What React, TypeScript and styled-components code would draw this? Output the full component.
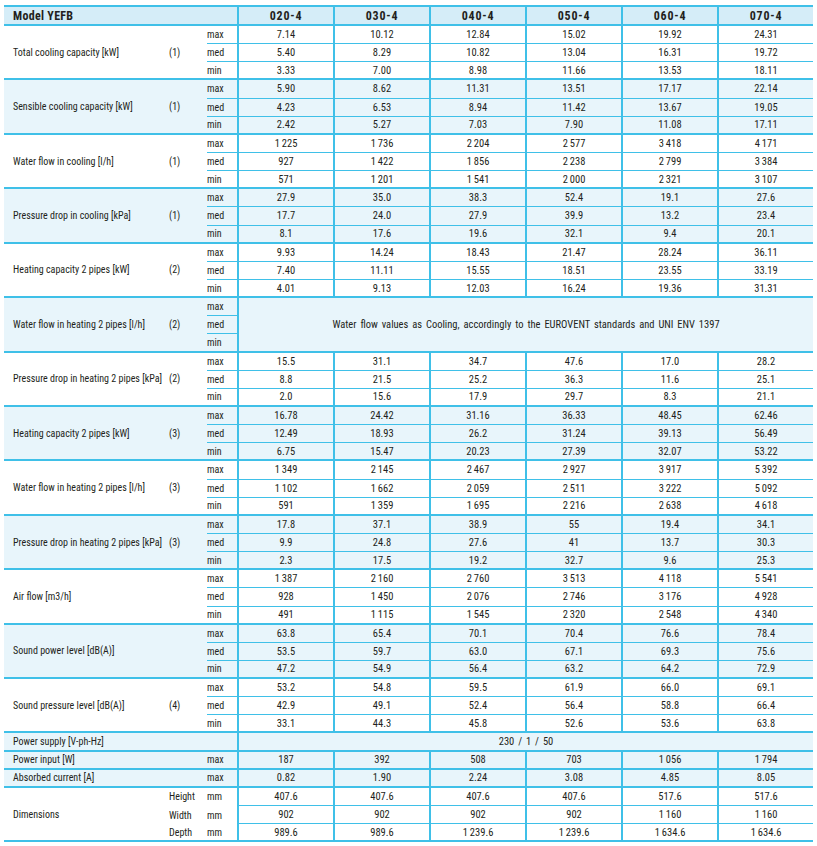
import React from "react";
import styled, { createGlobalStyle, css } from "styled-components";

const LINE = "#3fc0e8";
const HEAD_BG = "#d5edf8";
const ALT_BG = "#e8f5fb";
const WHITE = "#ffffff";
const FONT = `"Liberation Sans Narrow", "Roboto Condensed", "DejaVu Sans Condensed", Roboto, sans-serif`;

type Edge = "thick" | "thin" | "none";

const Global = createGlobalStyle`
  html, body { margin: 0; padding: 0; background: #fff; }
  body {
    font-family: ${FONT};
    color: #231f20;
  }
`;

const Page = styled.div`
  width: 817px;
  height: 846px;
  overflow: hidden;
  padding: 0 4px;
  box-sizing: border-box;
`;

const TitleClip = styled.div`
  height: 5px;
  overflow: hidden;
  display: flow-root;
`;

const Title = styled.h1`
  margin: -23px 0 0 9px;
  font-family: Roboto, sans-serif;
  font-size: 20px;
  line-height: 24px;
  font-weight: 700;
  color: #1fa3dc;
  white-space: nowrap;
`;

const Table = styled.div`
  display: grid;
  grid-template-columns: 161px 42px 30px repeat(6, 96px);
  grid-template-rows: 21px repeat(45, 18.15px);
  font-size: 10px;
`;

type CellProps = { $bg: string; $edge: Edge; $rows?: number; $cols?: number };

const cellBase = css<CellProps>`
  box-sizing: border-box;
  display: flex;
  align-items: center;
  min-width: 0;
  white-space: nowrap;
  background: ${(p) => p.$bg};
  border-bottom: ${(p) =>
    p.$edge === "thick" ? `2px solid ${LINE}` : p.$edge === "thin" ? `1px solid ${LINE}` : "none"};
  grid-row: span ${(p) => p.$rows ?? 1};
  grid-column: span ${(p) => p.$cols ?? 1};
`;

const HeadCell = styled.div<{ $first?: boolean; $cols?: number }>`
  box-sizing: border-box;
  display: flex;
  align-items: center;
  justify-content: ${(p) => (p.$first ? "flex-start" : "center")};
  padding-left: ${(p) => (p.$first ? "9px" : "0")};
  background: ${HEAD_BG};
  border-top: 2px solid ${LINE};
  border-bottom: 2px solid ${LINE};
  border-left: ${(p) => (p.$first ? "none" : `2px solid ${LINE}`)};
  grid-column: span ${(p) => p.$cols ?? 1};
  font-size: 12px;
  font-weight: 700;
  letter-spacing: ${(p) => (p.$first ? "0.3px" : "0.8px")};
  white-space: nowrap;
`;

const Label = styled.div<CellProps>`
  ${cellBase};
  padding-left: 9px;
`;

const Note = styled.div<CellProps>`
  ${cellBase};
  padding-left: 4px;
`;

const Unit = styled.div<CellProps>`
  ${cellBase};
`;

const Value = styled.div<CellProps>`
  ${cellBase};
  justify-content: center;
  border-left: 2px solid ${LINE};
  font-size: 10.5px;
`;

const SpanValue = styled.div<CellProps>`
  ${cellBase};
  justify-content: center;
  border-left: 2px solid ${LINE};
  font-size: 10.5px;
  word-spacing: 1.5px;
`;

const n = (s: string) => s.replace(/ /g, "\u2009");

type Group = {
  label: string;
  note?: string;
  rows?: string[][];
  span?: string;
};

const groups: Group[] = [
  {
    label: "Total cooling capacity [kW]",
    note: "(1)",
    rows: [
      ["7.14", "10.12", "12.84", "15.02", "19.92", "24.31"],
      ["5.40", "8.29", "10.82", "13.04", "16.31", "19.72"],
      ["3.33", "7.00", "8.98", "11.66", "13.53", "18.11"],
    ],
  },
  {
    label: "Sensible cooling capacity [kW]",
    note: "(1)",
    rows: [
      ["5.90", "8.62", "11.31", "13.51", "17.17", "22.14"],
      ["4.23", "6.53", "8.94", "11.42", "13.67", "19.05"],
      ["2.42", "5.27", "7.03", "7.90", "11.08", "17.11"],
    ],
  },
  {
    label: "Water flow in cooling [l/h]",
    note: "(1)",
    rows: [
      ["1 225", "1 736", "2 204", "2 577", "3 418", "4 171"],
      ["927", "1 422", "1 856", "2 238", "2 799", "3 384"],
      ["571", "1 201", "1 541", "2 000", "2 321", "3 107"],
    ],
  },
  {
    label: "Pressure drop in cooling [kPa]",
    note: "(1)",
    rows: [
      ["27.9", "35.0", "38.3", "52.4", "19.1", "27.6"],
      ["17.7", "24.0", "27.9", "39.9", "13.2", "23.4"],
      ["8.1", "17.6", "19.6", "32.1", "9.4", "20.1"],
    ],
  },
  {
    label: "Heating capacity 2 pipes [kW]",
    note: "(2)",
    rows: [
      ["9.93", "14.24", "18.43", "21.47", "28.24", "36.11"],
      ["7.40", "11.11", "15.55", "18.51", "23.55", "33.19"],
      ["4.01", "9.13", "12.03", "16.24", "19.36", "31.31"],
    ],
  },
  {
    label: "Water flow in heating 2 pipes [l/h]",
    note: "(2)",
    span: "Water flow values as Cooling, accordingly to the EUROVENT standards and UNI ENV 1397",
  },
  {
    label: "Pressure drop in heating 2 pipes [kPa]",
    note: "(2)",
    rows: [
      ["15.5", "31.1", "34.7", "47.6", "17.0", "28.2"],
      ["8.8", "21.5", "25.2", "36.3", "11.6", "25.1"],
      ["2.0", "15.6", "17.9", "29.7", "8.3", "21.1"],
    ],
  },
  {
    label: "Heating capacity 2 pipes [kW]",
    note: "(3)",
    rows: [
      ["16.78", "24.42", "31.16", "36.33", "48.45", "62.46"],
      ["12.49", "18.93", "26.2", "31.24", "39.13", "56.49"],
      ["6.75", "15.47", "20.23", "27.39", "32.07", "53.22"],
    ],
  },
  {
    label: "Water flow in heating 2 pipes [l/h]",
    note: "(3)",
    rows: [
      ["1 349", "2 145", "2 467", "2 927", "3 917", "5 392"],
      ["1 102", "1 662", "2 059", "2 511", "3 222", "5 092"],
      ["591", "1 359", "1 695", "2 216", "2 638", "4 618"],
    ],
  },
  {
    label: "Pressure drop in heating 2 pipes [kPa]",
    note: "(3)",
    rows: [
      ["17.8", "37.1", "38.9", "55", "19.4", "34.1"],
      ["9.9", "24.8", "27.6", "41", "13.7", "30.3"],
      ["2.3", "17.5", "19.2", "32.7", "9.6", "25.3"],
    ],
  },
  {
    label: "Air flow [m3/h]",
    rows: [
      ["1 387", "2 160", "2 760", "3 513", "4 118", "5 541"],
      ["928", "1 450", "2 076", "2 746", "3 176", "4 928"],
      ["491", "1 115", "1 545", "2 320", "2 548", "4 340"],
    ],
  },
  {
    label: "Sound power level [dB(A)]",
    rows: [
      ["63.8", "65.4", "70.1", "70.4", "76.6", "78.4"],
      ["53.5", "59.7", "63.0", "67.1", "69.3", "75.6"],
      ["47.2", "54.9", "56.4", "63.2", "64.2", "72.9"],
    ],
  },
  {
    label: "Sound pressure level [dB(A)]",
    note: "(4)",
    rows: [
      ["53.2", "54.8", "59.5", "61.9", "66.0", "69.1"],
      ["42.9", "49.1", "52.4", "56.4", "58.8", "66.4"],
      ["33.1", "44.3", "45.8", "52.6", "53.6", "63.8"],
    ],
  },
];

const models = ["020-4", "030-4", "040-4", "050-4", "060-4", "070-4"];
const levels = ["max", "med", "min"];

const singles = [
  { label: "Power input [W]", unit: "max", values: ["187", "392", "508", "703", "1 056", "1 794"] },
  { label: "Absorbed current [A]", unit: "max", values: ["0.82", "1.90", "2.24", "3.08", "4.85", "8.05"] },
];

const dims = [
  { name: "Height", values: ["407.6", "407.6", "407.6", "407.6", "517.6", "517.6"] },
  { name: "Width", values: ["902", "902", "902", "902", "1 160", "1 160"] },
  { name: "Depth", values: ["989.6", "989.6", "1 239.6", "1 239.6", "1 634.6", "1 634.6"] },
];

function GroupRows({ g, alt }: { g: Group; alt: boolean }) {
  const bg = alt ? ALT_BG : WHITE;
  return (
    <>
      <Label $bg={bg} $edge="thick" $rows={3}>
        {g.label}
      </Label>
      <Note $bg={bg} $edge="thick" $rows={3}>
        {g.note ?? ""}
      </Note>
      {levels.map((lv, i) => {
        const edge: Edge = i === 2 ? "thick" : "thin";
        return (
          <React.Fragment key={lv}>
            <Unit $bg={bg} $edge={edge}>
              {lv}
            </Unit>
            {g.span
              ? i === 0 && (
                  <SpanValue $bg={bg} $edge="thick" $rows={3} $cols={6}>
                    {g.span}
                  </SpanValue>
                )
              : g.rows![i].map((v, j) => (
                  <Value key={j} $bg={bg} $edge={edge}>
                    {n(v)}
                  </Value>
                ))}
          </React.Fragment>
        );
      })}
    </>
  );
}

export default function App() {
  return (
    <Page>
      <Global />
      <TitleClip>
        <Title>Technical specifications – YEFB 2 pipes, cooling and heating</Title>
      </TitleClip>
      <Table>
        <HeadCell $first $cols={3}>
          Model YEFB
        </HeadCell>
        {models.map((m) => (
          <HeadCell key={m}>{m}</HeadCell>
        ))}

        {groups.map((g, i) => (
          <GroupRows key={i} g={g} alt={i % 2 === 1} />
        ))}

        <Label $bg={ALT_BG} $edge="thick" $cols={3}>
          Power supply [V-ph-Hz]
        </Label>
        <SpanValue $bg={ALT_BG} $edge="thick" $cols={6}>
          {"230 / 1 / 50"}
        </SpanValue>

        {singles.map((s) => (
          <React.Fragment key={s.label}>
            <Label $bg={ALT_BG} $edge="thick" $cols={2}>
              {s.label}
            </Label>
            <Unit $bg={ALT_BG} $edge="thick">
              {s.unit}
            </Unit>
            {s.values.map((v, j) => (
              <Value key={j} $bg={ALT_BG} $edge="thick">
                {n(v)}
              </Value>
            ))}
          </React.Fragment>
        ))}

        <Label $bg={WHITE} $edge="thick" $rows={3}>
          Dimensions
        </Label>
        {dims.map((d, i) => {
          const last = i === dims.length - 1;
          const sideEdge: Edge = last ? "thick" : "none";
          return (
            <React.Fragment key={d.name}>
              <Note $bg={WHITE} $edge={sideEdge}>
                {d.name}
              </Note>
              <Unit $bg={WHITE} $edge={sideEdge}>
                mm
              </Unit>
              {d.values.map((v, j) => (
                <Value key={j} $bg={WHITE} $edge={last ? "thick" : "thin"}>
                  {n(v)}
                </Value>
              ))}
            </React.Fragment>
          );
        })}
      </Table>
    </Page>
  );
}
